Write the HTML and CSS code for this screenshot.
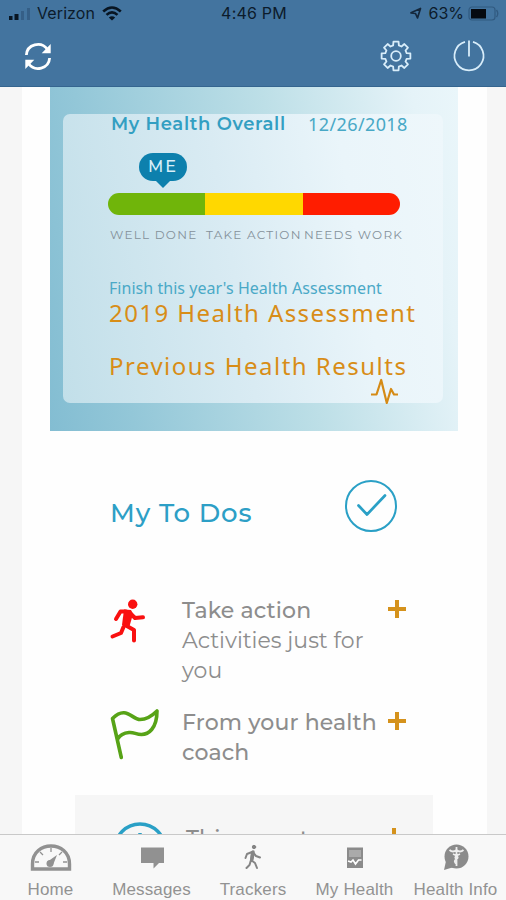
FILE: index.html
```html
<!DOCTYPE html>
<html lang="en">
<head>
<meta charset="utf-8">
<title>My Health</title>
<link rel="stylesheet" href="styles.css">
</head>
<body>
<div class="app">
  <header class="top">
    <div class="status">
      <div class="carrier">
        <svg width="24" height="14" viewBox="0 0 24 14"><path d="M1 9h3.500v4H1zM6.500 7h4v6h-4z" fill="#081522"/><path d="M13 4h3v9h-3zM19 1h3v12h-3z" fill="#355f87"/></svg>
        <span class="verizon">Verizon</span>
        <svg width="20" height="15" viewBox="0 0 20 15" fill="none" stroke="#081522" stroke-width="2.600"><path d="M1.200 5.500Q10-2.500 18.800 5.500M4.500 8.900Q10 3.800 15.500 8.900"/><path d="M10 14.500L6.800 11.500Q10 8.800 13.200 11.500Z" fill="#081522" stroke="none"/></svg>
      </div>
      <span class="clock">4:46 PM</span>
      <div class="power">
        <svg width="14" height="13" viewBox="0 0 14 13"><path d="M2 5.800L11.500 1.500L8.500 11L6.500 6.500Z" fill="none" stroke="#14273b" stroke-width="1.700" stroke-linejoin="round"/></svg>
        <span class="percent">63%</span>
        <svg width="32" height="16" viewBox="0 0 32 16"><rect x="1" y="1" width="26" height="13" rx="3" fill="none" stroke="#315a80" stroke-width="1.200"/><rect x="3" y="3" width="15" height="9.500" fill="#050a10"/><path d="M28.500 4Q31 7.500 28.500 11" fill="none" stroke="#315a80" stroke-width="1.400"/></svg>
      </div>
    </div>
    <nav class="tools">
      <svg class="refresh" width="28" height="29" viewBox="0 0 28 29" fill="none" stroke="#fff" stroke-width="2.800"><path d="M2.400 13C3 2.500 17-1.500 23.500 7.500M25.600 16C25 26.500 11 30.500 4.500 21.500"/><path d="M26.700 2v9.200h-9zM1.300 27v-9.200h9z" fill="#fff" stroke="none"/></svg>
      <svg class="gear" width="32" height="32" viewBox="-16 -16 32 32" fill="none" stroke="#d8edfa" stroke-width="1.800" stroke-linejoin="round"><path id="gear" d=""/><circle r="4.800"/></svg>
      <svg width="32" height="32" viewBox="0 0 32 32" fill="none" stroke="#d8edfa" stroke-width="1.800"><path d="M12 1.900A14.500 14.500 0 1 0 20 1.900M16 .5V16.500"/></svg>
    </nav>
  </header>
  <main class="sheet">
    <section class="card">
      <div class="panel">
        <div class="overall"><b class="ovl">My Health Overall</b><span class="date">12/26/2018</span></div>
        <div class="marker"><span class="me">ME</span></div>
        <div class="gauge"><i class="good"></i><i class="warn"></i><i class="bad"></i></div>
        <div class="scale"><span class="s1">WELL DONE</span><span class="s2">TAKE ACTION</span><span class="s3">NEEDS WORK</span></div>
        <div class="finish"><span>Finish this year's Health Assessment</span></div>
        <div class="link assess"><span>2019 Health Assessment</span></div>
        <div class="link prev"><span>Previous Health Results</span></div>
        <svg class="pulse" width="28" height="28" viewBox="0 0 28 28" fill="none" stroke="#d58b16" stroke-width="2.200" stroke-linejoin="round"><path d="M0 16.500H5.500L10.200 2L15.800 25L20 11L23 16.500H27"/></svg>
      </div>
    </section>
    <section class="todo-head">
      <h2><span>My To Dos</span></h2>
      <svg width="54" height="54" viewBox="0 0 54 54" fill="none" stroke="#2aa0c6"><circle cx="27" cy="27" r="25" stroke-width="2"/><path d="M14.500 26.500L23 35.500L41 16.500" stroke-width="2.700" stroke-linecap="round" stroke-linejoin="round"/></svg>
    </section>
    <section class="todos">
      <article class="todo first">
        <svg class="ico" width="50" height="50" viewBox="0 0 50 50"><circle cx="23.700" cy="7.200" r="4.700" fill="#f91010"/><path d="M17 14.500H11.500L7 22M20 15L26 21L34 20.300M16 28L25 33V43.500M14.500 30L12 36L3.500 39.500" fill="none" stroke="#f91010" stroke-width="4" stroke-linejoin="round" stroke-linecap="round"/><path d="M15 12.500L22 13L24 17L20 31L13 28Z" fill="#f91010"/></svg>
        <div class="copy"><b class="t1">Take action</b><span class="t2">Activities just for</span><span class="t3">you</span></div>
        <i class="plus"></i>
      </article>
      <article class="todo second">
        <svg class="ico flag" width="50" height="54" viewBox="0 0 50 54" fill="none" stroke="#57a317" stroke-width="3.600" stroke-linecap="round" stroke-linejoin="round"><path d="M12.300 48.500L3.500 9.500C17-4 23 10.500 31 10.500C38 10.500 43 7 48 2C48 20 39 25.500 32.500 25.500C27 25.500 25 23 20 23.500C15 24 11 26 9 29.500"/></svg>
        <div class="copy"><b class="t4">From your health</b><b class="t5">coach</b></div>
        <i class="plus"></i>
      </article>
      <article class="todo third">
        <svg class="ico" width="56" height="56" viewBox="0 0 56 56" fill="none" stroke="#2aa0c6" stroke-width="3.500"><circle cx="28" cy="28" r="25"/><path d="M28 12v18"/></svg>
        <div class="copy"><b class="t6">This event</b></div>
        <i class="plus"></i>
      </article>
    </section>
  </main>
  <footer class="tabs">
    <a class="tab home"><svg width="42" height="30" viewBox="0 0 42 30"><path d="M2.500 27V22C2.500-2 39.500-2 39.500 22V27Z" fill="#f8f8f8" stroke="#919191" stroke-width="3.400"/><path d="M21 6v4M10 10l3 3M32 10l-3 3M5 20h4M33 20h4" stroke="#919191" stroke-width="1.300"/><circle cx="20" cy="21.500" r="3.500" fill="#919191"/><path d="M17 20L27 13L23 23Z" fill="#919191"/></svg><span>Home</span></a>
    <a class="tab messages"><svg width="26" height="30" viewBox="0 0 26 30"><path d="M2 5.500H25V21H20L14.500 26.500V21H2Z" fill="#919191"/></svg><span>Messages</span></a>
    <a class="tab trackers"><svg width="20" height="30" viewBox="0 0 20 30" fill="none" stroke="#858585" stroke-width="2" stroke-linecap="round" stroke-linejoin="round"><circle cx="11" cy="5" r="1.700" fill="#858585" stroke-width="1"/><path d="M9 10L4 12L2.500 16M9 10L8 18L12 21L14 26M8 18L6.500 23L3.500 26M10.500 11L13 14L17 15.500"/><path d="M10 10L9 17" stroke-width="3.500"/></svg><span>Trackers</span></a>
    <a class="tab health"><svg width="20" height="30" viewBox="0 0 20 30"><path d="M2 5.500H18V26H2Z" fill="#8b8b8b"/><path d="M4 8h12v7H4z" fill="#aaa"/><path d="M3 19l3 1 2-2 2.500 4 3-4h3" fill="none" stroke="#fff" stroke-width="1.600"/></svg><span>My Health</span></a>
    <a class="tab info"><svg width="28" height="30" viewBox="0 0 28 30"><circle cx="14.500" cy="14.500" r="12" fill="#8b8b8b"/><path d="M4 19L2 28L12 25Z" fill="#8b8b8b"/><path d="M14.500 5v19M7.500 8q3.500 3 7 0q3.500 3 7 0M11 12q7 3 3.500 5t0 5M18 12q-7 3-3.500 5" fill="none" stroke="#eee" stroke-width="1.800"/></svg><span>Health Info</span></a>
  </footer>
</div>
<script src="script.js"></script>
</body>
</html>
```
FILE: script.js
```js
// Eight-toothed gear outline.
const points = [];
for (let i = 0; i < 8; i++) {
  const a = i * 45;
  [[-15, 11], [-10, 14.6], [10, 14.6], [15, 11]].forEach(([d, r]) => {
    const t = (a + d) * Math.PI / 180;
    points.push((r * Math.cos(t)).toFixed(2) + ' ' + (r * Math.sin(t)).toFixed(2));
  });
}
document.getElementById('gear').setAttribute('d', 'M' + points.join('L') + 'Z');
```
FILE: styles.css
```css
* { box-sizing: border-box; }
body { margin: 0; background: #f6f6f6; font-family: Montserrat, Inter, "Liberation Sans", sans-serif; }
.app { width: 506px; height: 900px; display: flex; flex-direction: column; overflow: hidden; }
.app span, .app b { white-space: nowrap; }
svg { display: block; flex: none; overflow: visible; }
.top { flex: none; height: 87px; background: #43749f; border-bottom: 1px solid #35658f; }
.status { display: grid; grid-template-columns: 1fr auto 1fr; align-items: center; height: 27px; padding: 0 6px 0 8px; color: #0c1b2b; font: 16px/27px Inter, sans-serif; }
.carrier, .power { display: flex; align-items: center; }
.verizon { margin: 0 7px 0 5px; letter-spacing: .1px; }
.clock { letter-spacing: .2px; }
.power { justify-content: flex-end; }
.percent { margin: 0 4px 0 5px; }
.tools { display: flex; align-items: center; height: 58px; padding: 0 21px 0 24px; }
.gear { margin-left: auto; margin-right: 41px; }
.sheet { flex: 1; min-height: 0; overflow: hidden; width: 465px; margin-left: 22px; background: #fefefe; padding-left: 28px; }
.card { width: 408px; height: 344px; padding: 27px 15px 28px 13px; background: linear-gradient(80deg, #83bdd2 0%, #93c7d8 18%, #bddfe7 58%, #e5f3f8 90%, #eaf6fa 100%); }
.panel { display: flex; flex-direction: column; height: 289px; border-radius: 7px; padding-left: 45px; background: linear-gradient(80deg, #c2dfe9, #d9ebf3 45%, #eaf5fa 75%, #eef7fb); }
.panel > * { flex: none; }
.overall { display: flex; height: 20px; line-height: 20px; padding-left: 3px; color: #339fc2; }
.ovl { width: 197px; font-size: 18px; font-weight: 600; letter-spacing: .65px; }
.date { font: 18px/20px "Noto Sans", sans-serif; letter-spacing: .4px; color: #48a8c6; }
.marker { position: relative; width: 48px; height: 28px; margin: 19px 0 0 31px; border-radius: 14px; background: #0d80ad; color: #d9eff8; text-align: center; font-size: 16px; font-weight: 500; line-height: 28px; letter-spacing: 2px; }
.marker::after { content: ""; position: absolute; left: 16px; top: 27px; border: 8px solid transparent; border-top-color: #0d80ad; border-bottom: 0; }
.gauge { display: flex; width: 292px; height: 22px; margin-top: 12px; border-radius: 11px; overflow: hidden; }
.gauge i { flex: 1; }
.good { background: #70b50a; }
.warn { background: #ffd800; }
.bad { background: #ff1d00; }
.scale { display: flex; height: 20px; margin-top: 10px; padding-left: 2px; font-size: 12px; line-height: 20px; letter-spacing: 1.25px; color: #84919a; }
.s1 { width: 96px; }
.s2 { width: 98px; }
.finish { height: 20px; margin-top: 33px; padding-left: 1px; font: 16px/20px "Noto Sans", sans-serif; letter-spacing: .04px; color: #4aa9c7; }
.link { height: 30px; padding-left: 1px; font: 24px/30px "Noto Sans", sans-serif; letter-spacing: 1.42px; color: #d88d17; }
.prev { margin-top: 23px; letter-spacing: 1.48px; }
.pulse { margin: -3px 0 0 263px; }
.todo-head { display: flex; justify-content: space-between; width: 348px; height: 137px; padding-top: 48px; color: #2d9fc6; }
.todo-head h2 { margin: 17px 0 0 60px; font-size: 26px; line-height: 34px; font-weight: 500; letter-spacing: .85px; }
.todos { width: 358px; margin-left: 25px; }
.todo { display: flex; position: relative; }
.first { height: 112px; padding: 27px 0 0 34px; }
.second { height: 115px; padding: 27px 0 0 34px; }
.third { height: 90px; padding: 26px 0 0 37px; background: #f6f6f6; }
.ico { margin-top: 2px; }
.third .ico { margin-top: 0; }
.copy { display: flex; flex-direction: column; width: 206px; margin: 1px 0 0 23px; font-size: 22px; line-height: 30px; color: #8d8d8d; }
.third .copy { margin: 3px 0 0 18px; word-spacing: 8px; }
.copy b { font-weight: 500; letter-spacing: .12px; }
.plus { width: 18px; height: 18px; margin-top: 5px; background: linear-gradient(#d5921c, #d5921c) center / 18px 4px no-repeat, linear-gradient(#d5921c, #d5921c) center / 4px 18px no-repeat; }
.third .plus { margin-left: -7px; margin-top: 7px; }
.tabs { flex: none; height: 66px; border-top: 1px solid #c9c9c9; background: #f8f8f8; display: grid; grid-template-columns: 101px 101px 102px 101px 101px; }
.tab { display: flex; flex-direction: column; align-items: center; padding-top: 7px; color: #929292; font: 17px/24px "Liberation Sans", sans-serif; letter-spacing: .15px; }
.tab svg { margin-bottom: 6px; }
```
